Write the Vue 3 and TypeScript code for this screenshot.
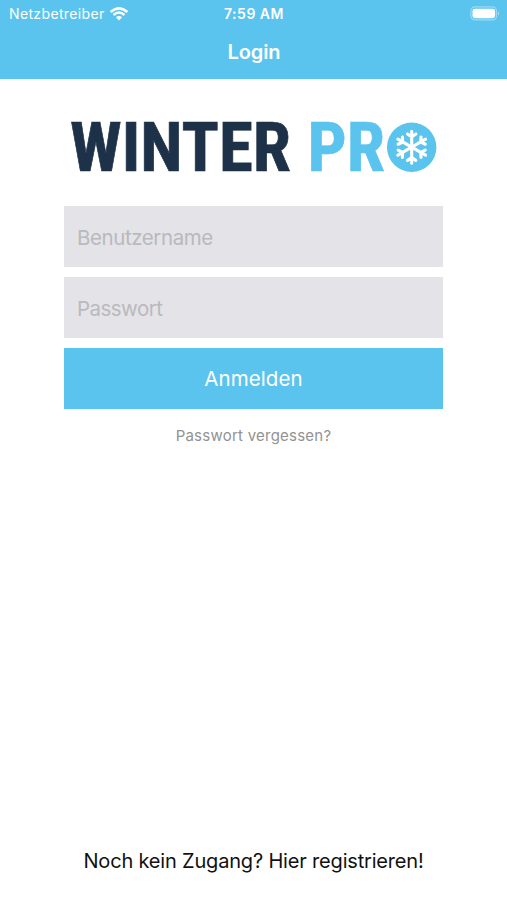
<script setup lang="ts">
import { ref } from 'vue'

const username = ref('')
const password = ref('')
const branches: number[] = [0, 60, 120, 180, 240, 300]
</script>

<template>
  <div class="screen">
    <header class="top">
      <div class="status">
        <div class="carrier">
          <span class="carrier-name">Netzbetreiber</span>
          <svg class="wifi" width="18" height="14" viewBox="0 0 18 14" fill="none">
            <path d="M.6 5Q9-2.4 17.4 5" stroke="#fff" stroke-width="2.6" />
            <path d="M3.5 8Q9 3.2 14.5 8" stroke="#fff" stroke-width="2.4" />
            <path d="M5.9 10.2Q9 7.6 12.1 10.2L9 13.4Z" fill="#fff" />
          </svg>
        </div>
        <span class="time">7:59 AM</span>
        <svg class="battery" width="31" height="15" viewBox="0 0 31 15">
          <rect x=".9" y=".9" width="25.6" height="13" rx="4" fill="none" stroke="#fff" stroke-opacity=".4" stroke-width="1.2" />
          <rect x="2.5" y="2.7" width="22.6" height="9.5" rx="2.4" fill="#fff" />
          <path d="M28 5.2Q30 7.4 28 9.6Z" fill="#fff" fill-opacity=".5" />
        </svg>
      </div>
      <h1 class="title"><span>Login</span></h1>
    </header>

    <main class="content">
      <svg class="logo" width="379" height="94" viewBox="64 100 379 94">
        <text class="word dark" x="70" y="171.4" textLength="221" lengthAdjust="spacingAndGlyphs">WINTER</text>
        <text class="word blue" x="307.5" y="171.4" textLength="77.5" lengthAdjust="spacingAndGlyphs">PR</text>
        <circle cx="411.7" cy="147.2" r="24.7" fill="#5ac4ee" />
        <g transform="translate(411.7 147.2)" fill="none" stroke="#fff" stroke-width="3.1" stroke-linecap="round">
          <path
            v-for="angle in branches"
            :key="angle"
            :transform="`rotate(${angle})`"
            d="M0 0V-16M-4.2-13.2L0-10.4L4.2-13.2"
          />
        </g>
      </svg>

      <form class="form" @submit.prevent>
        <input v-model="username" class="field user" type="text" placeholder="Benutzername" />
        <input v-model="password" class="field pass" type="password" placeholder="Passwort" />
        <button class="submit" type="submit"><span>Anmelden</span></button>
      </form>
      <a class="forgot">Passwort vergessen?</a>
    </main>

    <footer class="register"><span>Noch kein Zugang? Hier registrieren!</span></footer>
  </div>
</template>

<style>
body {
  margin: 0;
  background: #fff;
}
</style>

<style scoped>
.screen {
  display: flex;
  flex-direction: column;
  width: 507px;
  height: 900px;
  font-family: Inter, 'Liberation Sans', sans-serif;
  background: #fff;
}
.top {
  height: 79px;
  color: #fff;
  background: #5ac4ee;
}
.status {
  display: grid;
  grid-template-columns: 1fr auto 1fr;
  align-items: center;
  height: 27px;
  padding: 0 6px 0 9px;
  font-size: 14px;
  line-height: 27px;
}
.carrier {
  display: flex;
  align-items: center;
  gap: 5px;
}
.carrier-name {
  letter-spacing: 0.36px;
}
.time {
  margin-left: -2px;
  font-weight: 600;
  letter-spacing: 0.5px;
}
.battery {
  justify-self: end;
}
.title {
  margin: 0;
  padding: 10px 0 0 1px;
  font-size: 20px;
  font-weight: 600;
  line-height: 30px;
  letter-spacing: -0.1px;
  text-align: center;
}
.content {
  display: flex;
  flex: 1;
  flex-direction: column;
  align-items: center;
  padding-top: 21px;
}
.logo {
  display: block;
}
.word {
  font-family: Roboto, sans-serif;
  font-size: 69px;
  font-stretch: 75%;
  font-weight: 700;
  stroke-width: 0.7px;
}
.dark {
  fill: #1d3148;
  stroke: #1d3148;
}
.blue {
  fill: #5ac4ee;
  stroke: #5ac4ee;
}
.form {
  display: flex;
  flex-direction: column;
  gap: 10px;
  width: 379px;
  margin-top: 12px;
}
.field,
.submit {
  box-sizing: border-box;
  width: 100%;
  height: 61px;
  margin: 0;
  border: 0;
  border-radius: 0;
  font-family: inherit;
  font-size: 20.5px;
}
.field {
  padding: 1px 13px 0;
  background: #e4e3e8;
  outline: none;
}
.user {
  letter-spacing: -0.42px;
}
.pass {
  letter-spacing: -0.55px;
}
.field::placeholder {
  color: #b9b9be;
  opacity: 1;
}
.submit {
  padding: 0;
  color: #fff;
  background: #5ac4ee;
  letter-spacing: 0.1px;
}
.forgot {
  margin-top: 17px;
  color: #929292;
  font-size: 15px;
  line-height: 20px;
  letter-spacing: 0.24px;
}
.register {
  padding-bottom: 24px;
  color: #111;
  font-size: 20px;
  line-height: 30px;
  letter-spacing: -0.18px;
  text-align: center;
}
</style>
